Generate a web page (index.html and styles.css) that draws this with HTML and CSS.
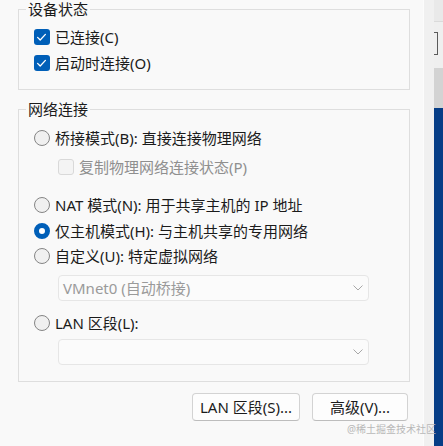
FILE: index.html
```html
<!DOCTYPE html>
<html lang="zh-CN">
<head>
<meta charset="utf-8">
<title>网络适配器</title>
<link rel="stylesheet" href="styles.css">
</head>
<body>
<div class="screen">
  <div class="dialog">
    <fieldset class="group group-status">
      <legend>设备状态</legend>
      <div class="group-body status-body">
        <div class="row">
          <span class="cb checked"><svg width="16" height="16" viewBox="0 0 16 16"><path d="M3.6 8.4 L6.2 11 L11.4 5.4" fill="none" stroke="#fff" stroke-width="1.3" stroke-linecap="round" stroke-linejoin="round"/></svg></span>
          <span class="label">已连接(C)</span>
        </div>
        <div class="row">
          <span class="cb checked"><svg width="16" height="16" viewBox="0 0 16 16"><path d="M3.6 8.4 L6.2 11 L11.4 5.4" fill="none" stroke="#fff" stroke-width="1.3" stroke-linecap="round" stroke-linejoin="round"/></svg></span>
          <span class="label">启动时连接(O)</span>
        </div>
      </div>
    </fieldset>

    <fieldset class="group group-net">
      <legend>网络连接</legend>
      <div class="group-body net-body">
        <div class="row">
          <span class="radio"></span>
          <span class="label">桥接模式(B): 直接连接物理网络</span>
        </div>
        <div class="row sub gap-s">
          <span class="cb disabled"></span>
          <span class="label muted">复制物理网络连接状态(P)</span>
        </div>
        <div class="row gap-l">
          <span class="radio"></span>
          <span class="label">NAT 模式(N): 用于共享主机的 IP 地址</span>
        </div>
        <div class="row short">
          <span class="radio selected"></span>
          <span class="label">仅主机模式(H): 与主机共享的专用网络</span>
        </div>
        <div class="row">
          <span class="radio"></span>
          <span class="label">自定义(U): 特定虚拟网络</span>
        </div>
        <div class="select first">
          <span class="select-text">VMnet0 (自动桥接)</span>
          <svg class="chev" width="10" height="6" viewBox="0 0 10 6"><path d="M0.5 0.5 L5 5 L9.5 0.5" fill="none" stroke="#a8a8a8" stroke-width="1"/></svg>
        </div>
        <div class="row gap-m">
          <span class="radio"></span>
          <span class="label">LAN 区段(L):</span>
        </div>
        <div class="select second">
          <span class="select-text"></span>
          <svg class="chev" width="10" height="6" viewBox="0 0 10 6"><path d="M0.5 0.5 L5 5 L9.5 0.5" fill="none" stroke="#a8a8a8" stroke-width="1"/></svg>
        </div>
      </div>
    </fieldset>

    <div class="buttons">
      <button class="btn btn-lan" type="button">LAN 区段(S)...</button>
      <button class="btn btn-adv" type="button">高级(V)...</button>
    </div>
  </div>
  <div class="divider"></div>
  <div class="edge">
    <div class="edge-top"></div>
    <div class="edge-mid"><span class="edge-box"></span></div>
    <div class="edge-gray"></div>
    <div class="edge-blue"></div>
  </div>
  <div class="watermark">@稀土掘金技术社区</div>
</div>
</body>
</html>
```

FILE: styles.css
```css
* { box-sizing: border-box; }
html, body { margin: 0; padding: 0; }
body {
  width: 443px;
  height: 446px;
  overflow: hidden;
  background: #f9f9f9;
  font-family: "Noto Sans", "Noto Sans CJK SC", sans-serif;
  font-size: 15px;
  color: #1b1b1b;
}
.screen {
  position: relative;
  display: flex;
  width: 443px;
  height: 446px;
}
.dialog {
  width: 423px;
  flex: none;
  padding-left: 18px;
  background: #f9f9f9;
}
.group {
  margin: 0;
  padding: 0;
  min-width: 0;
  width: 392px;
  border: 1px solid #dedede;
}
.group legend {
  margin-left: 7px;
  padding: 0 2px;
  font-size: 15px;
  line-height: 18px;
  height: 18px;
}
.group-net { margin-top: 10px; }
.status-body { padding: 6px 0 13px 15px; }
.net-body { padding: 7px 0 16px 15px; }
.row {
  display: flex;
  align-items: center;
  height: 26px;
  gap: 5px;
  line-height: 18px;
  white-space: nowrap;
}
.row.short { height: 25px; }
.row.sub { padding-left: 24px; }
.gap-s { margin-top: 3px; }
.gap-l { margin-top: 12px; }
.gap-m { margin-top: 9px; }
.label { display: block; }
.muted { color: #8f8f8f; }
.cb {
  flex: none;
  width: 16px;
  height: 16px;
  border-radius: 3px;
  display: block;
}
.cb svg { display: block; }
.cb.checked { background: #005fb8; }
.cb.disabled {
  background: #f4f4f4;
  border: 1px solid #d9d9d9;
}
.radio {
  flex: none;
  width: 16px;
  height: 16px;
  border-radius: 50%;
  border: 1px solid #858585;
  background: #f0f0f0;
}
.radio.selected {
  border: 5px solid #005fb8;
  background: #ffffff;
}
.select {
  display: flex;
  align-items: center;
  justify-content: space-between;
  width: 311px;
  height: 26px;
  margin-left: 24px;
  padding: 0 5px 0 4px;
  border: 1px solid #e6e6e6;
  border-radius: 4px;
  background: #fbfbfb;
  color: #9a9a9a;
  line-height: 18px;
}
.select.first { margin-top: 6px; }
.select.second { margin-top: 3px; }
.chev { display: block; flex: none; }
.buttons {
  display: flex;
  justify-content: flex-end;
  gap: 12px;
  width: 392px;
  padding-right: 2px;
  margin-top: 11px;
}
.btn {
  height: 28px;
  padding: 0;
  border: 1px solid #d3d3d3;
  border-bottom-color: #bdbdbd;
  border-radius: 4px;
  background: #fdfdfd;
  font-family: "Noto Sans", "Noto Sans CJK SC", sans-serif;
  font-size: 15px;
  color: #1b1b1b;
  line-height: 18px;
}
.btn-lan { width: 108px; }
.btn-adv { width: 96px; }
.divider {
  width: 11px;
  flex: none;
  background: #f0f0f0;
  border-left: 1px solid #fcfcfc;
}
.edge {
  width: 9px;
  flex: none;
  display: flex;
  flex-direction: column;
}
.edge-top { height: 22px; background: #e9e9e9; border-bottom: 1px solid #dadada; }
.edge-mid { height: 46px; background: #efefef; padding-top: 10px; }
.edge-box {
  display: block;
  width: 4px;
  height: 23px;
  border: 1px solid #5a5a5a;
  border-left: none;
}
.edge-gray { height: 40px; background: #d3d3d3; }
.edge-blue { flex: 1; background: #063d86; }
.watermark {
  position: absolute;
  left: 347px;
  top: 423px;
  font-size: 10px;
  line-height: 12px;
  color: #b8b8b8;
  white-space: nowrap;
}
```
